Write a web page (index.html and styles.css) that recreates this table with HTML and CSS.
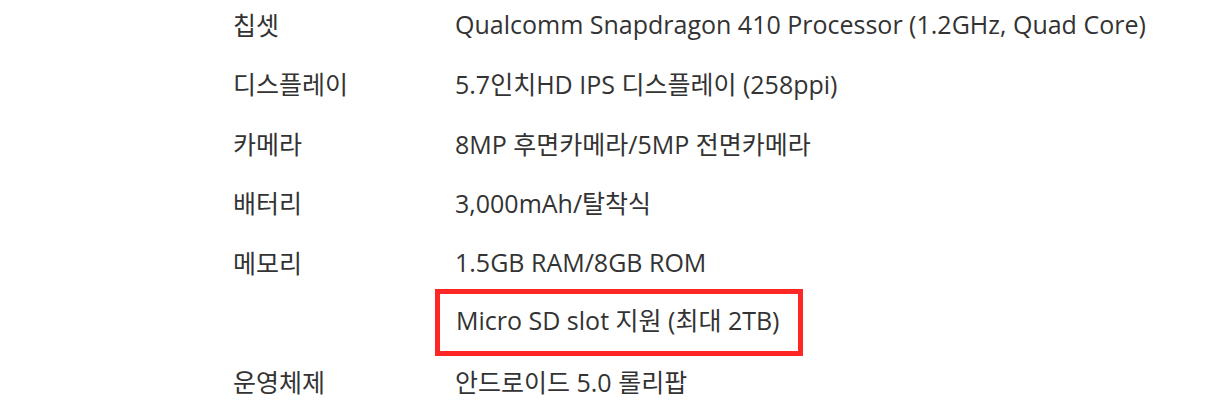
FILE: index.html
```html
<!DOCTYPE html>
<html lang="ko">
<head>
  <meta charset="UTF-8">
  <link rel="stylesheet" href="styles.css">
  <title>스펙</title>
</head>
<body>
  <table class="spec-table">
    <tr><th>칩셋</th><td>Qualcomm Snapdragon 410 Processor (1.2GHz, Quad Core)</td></tr>
    <tr><th>디스플레이</th><td>5.7인치HD IPS 디스플레이 (258ppi)</td></tr>
    <tr><th>카메라</th><td>8MP 후면카메라/5MP 전면카메라</td></tr>
    <tr><th>배터리</th><td>3,000mAh/탈착식</td></tr>
    <tr><th>메모리</th><td>1.5GB RAM/8GB ROM</td></tr>
    <tr><th></th><td><span class="highlight">Micro SD slot 지원 (최대 2TB)</span></td></tr>
    <tr><th>운영체제</th><td>안드로이드 5.0 롤리팝</td></tr>
  </table>
</body>
</html>
```

FILE: styles.css
```css
body {
  margin: 0;
  background-color: #fff;
  font-family: 'Open Sans', 'Noto Sans CJK KR', sans-serif;
  color: #333;
}

.spec-table {
  border-collapse: collapse;
  margin: -6px 0 0 233px;
  font-size: 25px;
}

.spec-table th,
.spec-table td {
  height: 59.5px;
  padding: 0;
  text-align: left;
  font-weight: normal;
  vertical-align: middle;
  white-space: nowrap;
}

.spec-table th {
  width: 222px;
}

.highlight {
  display: inline-block;
  vertical-align: middle;
  margin: -3px 0 -5px -20px;
  padding: 9px 19px 13px 16px;
  border: 5px solid #ff2626;
  line-height: 35px;
}
```
